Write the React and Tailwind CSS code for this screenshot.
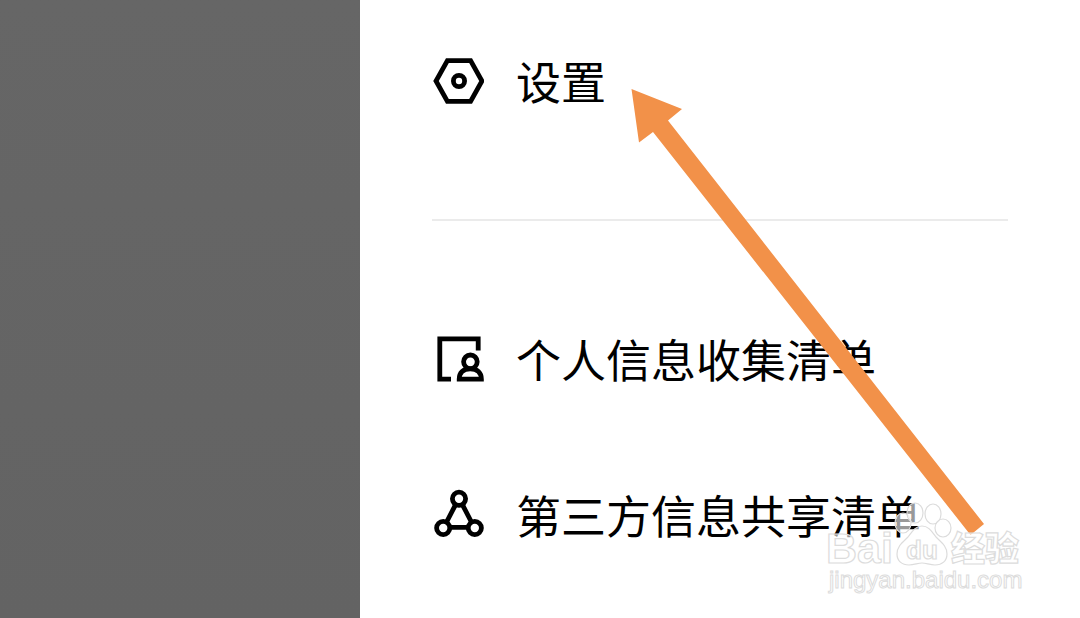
function SettingsIcon() {
  return (
    <svg className="h-[52px] w-[52px] shrink-0" viewBox="0 0 52 52" fill="none" stroke="#000" strokeWidth="4.8" aria-hidden="true">
      <path d="M15.400 5.600H38.600L50 26L38.600 46.400H15.400L4 26Z" />
      <circle cx="27" cy="26" r="5.600" />
    </svg>
  );
}

function PersonalListIcon() {
  return (
    <svg className="h-[52px] w-[52px] shrink-0" viewBox="0 0 52 52" fill="none" stroke="#000" strokeWidth="4.8" aria-hidden="true">
      <path d="M19 46.200H7.800V5.800H46.200V17.600" />
      <circle cx="38.400" cy="28.800" r="6.800" />
      <path d="M27.200 46.200C27.200 39.400 31.200 35.800 38.200 35.800S49.400 39.400 49.400 46.200Z" />
    </svg>
  );
}

function ShareListIcon() {
  return (
    <svg className="h-[52px] w-[52px] shrink-0" viewBox="0 0 52 52" fill="none" stroke="#000" strokeWidth="4.8" aria-hidden="true">
      <circle cx="27" cy="9.800" r="6.600" />
      <circle cx="11.200" cy="39" r="6.600" />
      <circle cx="42.800" cy="39" r="6.600" />
      <path d="M23.600 15.600L14.600 33M30.400 15.600L39.400 33M18 38.400H36" />
    </svg>
  );
}

function MenuRow({ icon, label }) {
  return (
    <li>
      <a href="#" className="flex h-[156px] items-center gap-8 text-[45px] leading-[60px] text-black">
        {icon}
        <span className="whitespace-nowrap">{label}</span>
      </a>
    </li>
  );
}

function Arrow() {
  return (
    <svg className="pointer-events-none absolute top-[88px] left-[270px] h-[450px] w-[360px]" viewBox="0 0 360 450" aria-hidden="true">
      <path d="M1.500 1L52 21L38 32.500L354 436L340.500 447L23 44L9 54.500Z" fill="#f29149" />
    </svg>
  );
}

function Watermark() {
  return (
    <svg
      className="pointer-events-none absolute top-[498px] left-[460px] h-[104px] w-[212px] font-['Liberation_Sans','Noto_Sans_CJK_SC',sans-serif]"
      viewBox="0 0 212 104"
      fill="#fff"
      fillOpacity="0.6"
      stroke="#dcdcdc"
      strokeWidth="1.200"
    >
      <ellipse cx="83" cy="25" rx="8" ry="10" />
      <ellipse cx="95" cy="15" rx="8" ry="10" />
      <ellipse cx="113" cy="16" rx="8" ry="10" />
      <ellipse cx="123" cy="30" rx="8" ry="9" />
      <path d="M102 28C95 28 92 34 88 39C83 44 77 48 77 56C77 63 82 67 89 67C94 67 98 65 102 65C106 65 110 67 115 67C122 67 127 63 127 56C127 48 121 44 116 39C112 34 109 28 102 28Z" />
      <text x="6" y="65" fontSize="43" fontWeight="700">Bai</text>
      <text x="86" y="61" fontSize="26" fontWeight="700">du</text>
      <text x="131" y="63" fontSize="34" fontWeight="900">经验</text>
      <text x="9" y="90" fontSize="24" strokeWidth="1">jingyan.baidu.com</text>
    </svg>
  );
}

export default function App() {
  return (
    <div className="flex min-h-screen overflow-hidden bg-white font-['Noto_Sans_CJK_SC',sans-serif]">
      <div className="w-1/3 shrink-0 bg-linear-to-b from-[#666666] to-[#636363]" />
      <main className="relative min-w-0 flex-1 px-[72px] pt-[3px]">
        <ul>
          <MenuRow icon={<SettingsIcon />} label="设置" />
        </ul>
        <hr className="my-[60px] border-t-2 border-[#ebebeb]" />
        <ul>
          <MenuRow icon={<PersonalListIcon />} label="个人信息收集清单" />
          <MenuRow icon={<ShareListIcon />} label="第三方信息共享清单" />
        </ul>
        <Arrow />
        <Watermark />
      </main>
    </div>
  );
}
